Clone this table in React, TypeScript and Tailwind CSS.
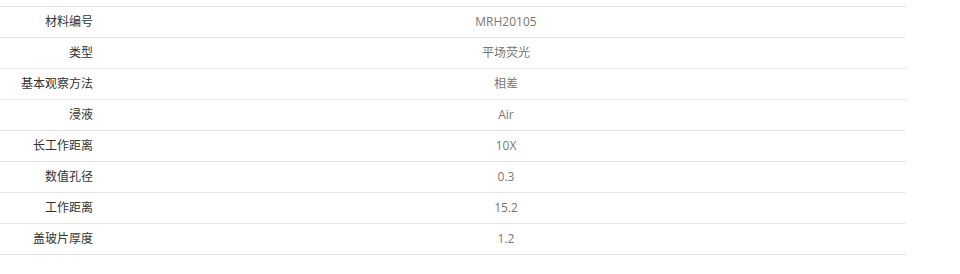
const rows: [string, string][] = [
  ["材料编号", "MRH20105"],
  ["类型", "平场荧光"],
  ["基本观察方法", "相差"],
  ["浸液", "Air"],
  ["长工作距离", "10X"],
  ["数值孔径", "0.3"],
  ["工作距离", "15.2"],
  ["盖玻片厚度", "1.2"],
];

export default function App() {
  return (
    <div
      className="h-[274px] w-[960px] bg-white pt-[6px]"
      style={{ fontFamily: '"Open Sans", "Noto Sans CJK SC", sans-serif' }}
    >
      <div className="w-[906px] border-t border-[#e6e6e6] text-[12px]">
        {rows.map(([label, value]) => (
          <div key={label} className="flex h-[31px] items-center border-b border-[#e6e6e6]">
            <div className="w-[106px] shrink-0 pr-[13px] text-right text-[#333]">{label}</div>
            <div className="flex-1 text-center text-[#777]">{value}</div>
          </div>
        ))}
      </div>
    </div>
  );
}
